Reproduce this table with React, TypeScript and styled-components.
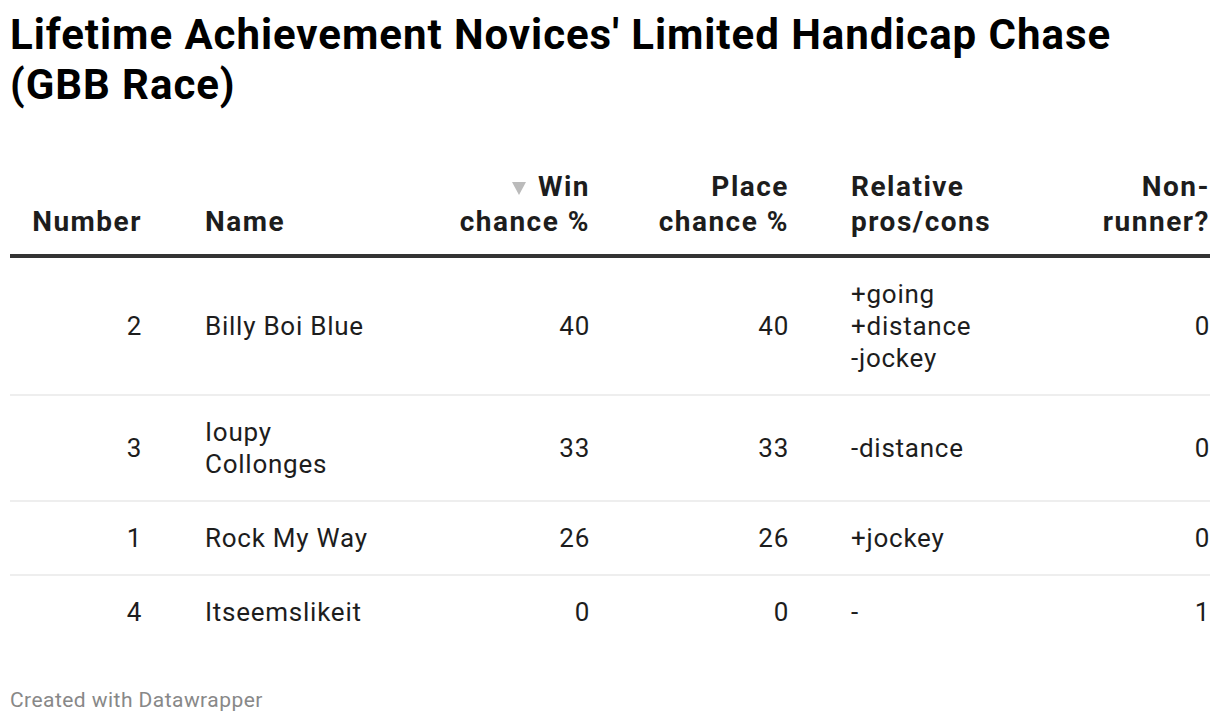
import React from 'react';
import styled, { createGlobalStyle } from 'styled-components';

const GlobalStyle = createGlobalStyle`
    html, body {
        margin: 0;
        padding: 0;
        background: #ffffff;
    }
    body {
        font-family: Roboto, "Liberation Sans", Arial, sans-serif;
        color: #1d1d1d;
    }
`;

const Page = styled.div`
    padding: 10px;
    width: 1200px;
`;

const Title = styled.h1`
    margin: 0;
    font-size: 42px;
    line-height: 50px;
    letter-spacing: 0.95px;
    font-weight: 700;
    color: #000000;
`;

const Table = styled.table`
    width: 1200px;
    margin-top: 59px;
    border-collapse: collapse;
    table-layout: fixed;
`;

type Align = 'left' | 'right';

const HeadCell = styled.th<{ $align: Align; $pl: number; $pr: number }>`
    text-align: ${(p) => p.$align};
    padding: 0 ${(p) => p.$pr}px 15px ${(p) => p.$pl}px;
    vertical-align: bottom;
    font-size: 28px;
    line-height: 35px;
    letter-spacing: 1.5px;
    font-weight: 700;
    color: #1d1d1d;
    border-bottom: 4px solid #333333;
`;

const Cell = styled.td<{ $align: Align; $pl: number; $pr: number; $last?: boolean }>`
    text-align: ${(p) => p.$align};
    padding: 20px ${(p) => p.$pr}px 20px ${(p) => p.$pl}px;
    vertical-align: middle;
    font-size: 26px;
    line-height: 32px;
    letter-spacing: 0.75px;
    font-weight: 400;
    color: #1d1d1d;
    border-bottom: ${(p) => (p.$last ? 'none' : '2px solid #eeeeee')};
`;

const SortArrow = styled.span`
    display: inline-block;
    width: 0;
    height: 0;
    border-left: 7.5px solid transparent;
    border-right: 7.5px solid transparent;
    border-top: 13px solid #bbbbbb;
    margin-right: 12px;
    vertical-align: 1px;
`;

const Footer = styled.div`
    margin-top: 40px;
    font-size: 21px;
    line-height: 24px;
    letter-spacing: 0.45px;
    color: #888888;
`;

const columns: { width: number; align: Align; pl: number; pr: number }[] = [
    { width: 150, align: 'right', pl: 0, pr: 18 },
    { width: 230, align: 'left', pl: 45, pr: 10 },
    { width: 218, align: 'right', pl: 40, pr: 18 },
    { width: 199, align: 'right', pl: 40, pr: 18 },
    { width: 253, align: 'left', pl: 44, pr: 10 },
    { width: 150, align: 'right', pl: 20, pr: 0 },
];

const rows = [
    { number: '2', name: 'Billy Boi Blue', win: '40', place: '40', pros: ['+going', '+distance', '-jockey'], nr: '0' },
    { number: '3', name: 'Ioupy Collonges', win: '33', place: '33', pros: ['-distance'], nr: '0' },
    { number: '1', name: 'Rock My Way', win: '26', place: '26', pros: ['+jockey'], nr: '0' },
    { number: '4', name: 'Itseemslikeit', win: '0', place: '0', pros: ['-'], nr: '1' },
];

const App = () => {
    const headers: React.ReactNode[] = [
        'Number',
        'Name',
        <>
            <SortArrow />
            Win chance %
        </>,
        'Place chance %',
        'Relative pros/cons',
        'Non-runner?',
    ];

    return (
        <Page>
            <GlobalStyle />
            <Title>Lifetime Achievement Novices' Limited Handicap Chase (GBB Race)</Title>
            <Table>
                <colgroup>
                    {columns.map((c, i) => (
                        <col key={i} style={{ width: c.width }} />
                    ))}
                </colgroup>
                <thead>
                    <tr>
                        {headers.map((h, i) => (
                            <HeadCell key={i} $align={columns[i].align} $pl={columns[i].pl} $pr={columns[i].pr}>
                                {h}
                            </HeadCell>
                        ))}
                    </tr>
                </thead>
                <tbody>
                    {rows.map((r, ri) => {
                        const last = ri === rows.length - 1;
                        const values: React.ReactNode[] = [
                            r.number,
                            r.name,
                            r.win,
                            r.place,
                            r.pros.map((p, pi) => (
                                <React.Fragment key={pi}>
                                    {pi > 0 && <br />}
                                    {p}
                                </React.Fragment>
                            )),
                            r.nr,
                        ];
                        return (
                            <tr key={ri}>
                                {values.map((v, ci) => (
                                    <Cell
                                        key={ci}
                                        $align={columns[ci].align}
                                        $pl={columns[ci].pl}
                                        $pr={columns[ci].pr}
                                        $last={last}
                                    >
                                        {v}
                                    </Cell>
                                ))}
                            </tr>
                        );
                    })}
                </tbody>
            </Table>
            <Footer>Created with Datawrapper</Footer>
        </Page>
    );
};

export default App;
